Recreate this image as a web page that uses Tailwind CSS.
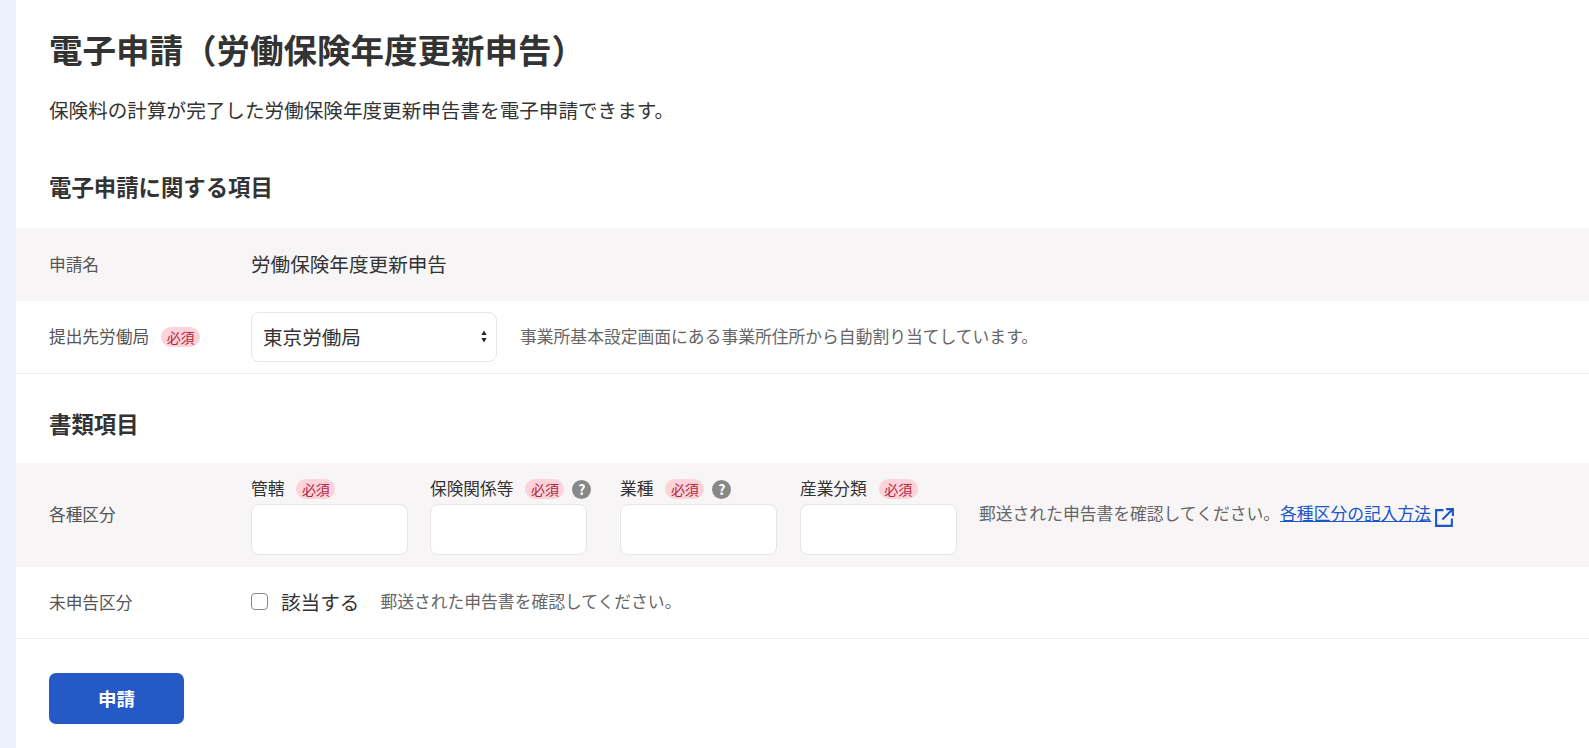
<!DOCTYPE html>
<html lang="ja">
  <head>
    <meta charset="UTF-8" />
    <title>電子申請（労働保険年度更新申告）</title>
    <script src="https://cdn.jsdelivr.net/npm/@tailwindcss/browser@4"></script>
  </head>
  <body class="bg-[#eaf1fd] h-[748px] overflow-hidden pl-4 text-[#333] font-['Noto_Sans_CJK_JP','Noto_Sans',sans-serif]">
    <main class="bg-white h-full">
      <!-- タイトル -->
      <div class="px-[33px]">
        <h1 class="pt-[25px] text-[33.5px] leading-[48px] font-bold">電子申請（労働保険年度更新申告）</h1>
        <p class="mt-[23px] text-[19.6px] leading-[28px]">保険料の計算が完了した労働保険年度更新申告書を電子申請できます。</p>
        <h2 class="mt-[45px] text-[22.4px] leading-[34px] font-bold">電子申請に関する項目</h2>
      </div>

      <!-- 電子申請に関する項目 -->
      <div class="mt-[25px] bg-[#f7f5f6] h-[73px] flex items-center px-[33px]">
        <div class="w-[202px] text-[16.7px] text-[#555]">申請名</div>
        <div class="text-[19.6px] -mt-[2px]">労働保険年度更新申告</div>
      </div>
      <div class="h-[73px] flex items-center px-[33px] border-b border-[#eeeeee]">
        <div class="w-[202px] flex items-center text-[16.7px] text-[#555]">
          提出先労働局
          <span class="ml-[12px] bg-[#fcd3da] text-[#b3263f] text-[14px] leading-[20px] px-[5.5px] rounded-full">必須</span>
        </div>
        <div class="relative">
          <select class="appearance-none w-[246px] h-[50px] bg-white border border-[#e6e6e6] rounded-[8px] pl-[11px] text-[19.6px] text-[#333]">
            <option>東京労働局</option>
          </select>
          <svg class="absolute right-[10px] top-[17px] w-[6px] h-[15px]" viewBox="0 0 6 14">
            <path d="M3 1 L5.6 5.5 H0.4 Z M3 13 L0.4 8.5 H5.6 Z" fill="#222" />
          </svg>
        </div>
        <p class="ml-[23px] text-[16.8px] text-[#666]">事業所基本設定画面にある事業所住所から自動割り当てしています。</p>
      </div>

      <!-- 書類項目 -->
      <h2 class="mt-[32px] px-[33px] text-[22.4px] leading-[34px] font-bold">書類項目</h2>
      <div class="mt-[23px] bg-[#f7f5f6] h-[104px] flex items-center px-[33px]">
        <div class="w-[202px] text-[16.7px] text-[#555]">各種区分</div>
        <div class="flex">
          <div class="w-[179px]">
            <div class="flex items-center h-[24px] pt-[3px] text-[16.7px]">
              管轄
              <span class="ml-[12px] bg-[#fcd3da] text-[#b3263f] text-[14px] leading-[20px] px-[5.5px] rounded-full">必須</span>
            </div>
            <input class="block w-[157px] h-[51px] mt-[4px] bg-white border border-[#e6e6e6] rounded-[8px]" />
          </div>
          <div class="w-[190px]">
            <div class="flex items-center h-[24px] pt-[3px] text-[16.7px]">
              保険関係等
              <span class="ml-[12px] bg-[#fcd3da] text-[#b3263f] text-[14px] leading-[20px] px-[5.5px] rounded-full">必須</span>
              <span class="ml-[8px] w-[19px] h-[19px] rounded-full bg-[#888] text-white text-[14px] leading-[19px] font-bold text-center">?</span>
            </div>
            <input class="block w-[157px] h-[51px] mt-[4px] bg-white border border-[#e6e6e6] rounded-[8px]" />
          </div>
          <div class="w-[180px]">
            <div class="flex items-center h-[24px] pt-[3px] text-[16.7px]">
              業種
              <span class="ml-[12px] bg-[#fcd3da] text-[#b3263f] text-[14px] leading-[20px] px-[5.5px] rounded-full">必須</span>
              <span class="ml-[8px] w-[19px] h-[19px] rounded-full bg-[#888] text-white text-[14px] leading-[19px] font-bold text-center">?</span>
            </div>
            <input class="block w-[157px] h-[51px] mt-[4px] bg-white border border-[#e6e6e6] rounded-[8px]" />
          </div>
          <div class="w-[179px]">
            <div class="flex items-center h-[24px] pt-[3px] text-[16.7px]">
              産業分類
              <span class="ml-[12px] bg-[#fcd3da] text-[#b3263f] text-[14px] leading-[20px] px-[5.5px] rounded-full">必須</span>
            </div>
            <input class="block w-[157px] h-[51px] mt-[4px] bg-white border border-[#e6e6e6] rounded-[8px]" />
          </div>
        </div>
        <p class="flex items-center text-[16.8px] text-[#666] -mt-[2px]">
          郵送された申告書を確認してください。<a href="#" class="text-[#1d56c9] underline">各種区分の記入方法</a>
          <svg class="ml-[3px] mt-[6px] w-[21px] h-[21px]" viewBox="0 0 20 20" fill="none" stroke="#1d56c9" stroke-width="2">
            <path d="M9 3 H2 V18 H17 V11" />
            <path d="M8 12 L18 2 M11.5 2 H18 V8.5" />
          </svg>
        </p>
      </div>
      <div class="h-[72px] flex items-center px-[33px] border-b border-[#eeeeee]">
        <div class="w-[202px] text-[16.7px] text-[#555]">未申告区分</div>
        <input type="checkbox" class="appearance-none -mt-[3px] w-[17px] h-[17px] bg-white border-[1.5px] border-[#888] rounded-[4px]" />
        <span class="ml-[13px] text-[19.6px] -mt-[1px]">該当する</span>
        <p class="ml-[21px] text-[16.8px] text-[#666] -mt-[1px]">郵送された申告書を確認してください。</p>
      </div>

      <!-- 申請ボタン -->
      <div class="px-[33px] pt-[34px]">
        <button class="w-[135px] h-[51px] bg-[#2459c6] text-white text-[18.5px] font-bold rounded-[7px]">申請</button>
      </div>
    </main>
  </body>
</html>
